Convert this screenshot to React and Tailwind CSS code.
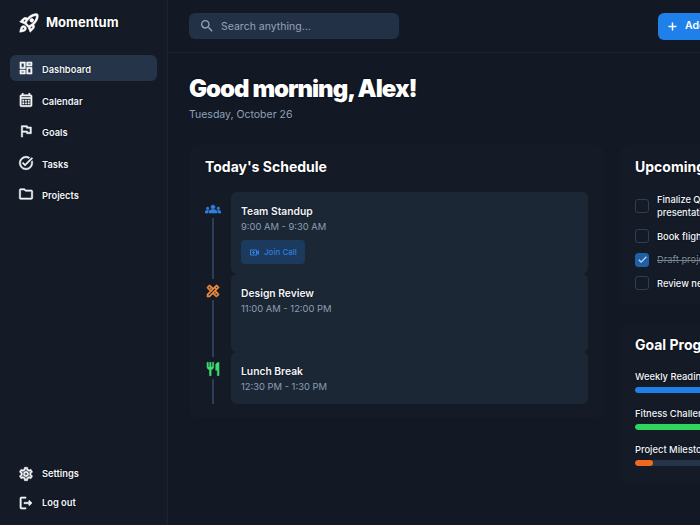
import React from "react";
import {
  MdOutlineRocketLaunch,
  MdOutlineDashboard,
  MdOutlineCalendarMonth,
  MdOutlineFlag,
  MdOutlineTaskAlt,
  MdOutlineFolder,
  MdOutlineSettings,
  MdOutlineLogout,
  MdGroups,
  MdOutlineDesignServices,
  MdRestaurant,
  MdOutlineVideoCall,
  MdSearch,
  MdAdd,
  MdCheck,
} from "react-icons/md";

// thickens the material glyphs, the invisible bounding path must stay unstroked
const heavy = "stroke-current stroke-[0.8] [&_path[fill=none]]:stroke-transparent";

const navItems = [
  { label: "Dashboard", icon: MdOutlineDashboard, active: true },
  { label: "Calendar", icon: MdOutlineCalendarMonth },
  { label: "Goals", icon: MdOutlineFlag },
  { label: "Tasks", icon: MdOutlineTaskAlt },
  { label: "Projects", icon: MdOutlineFolder },
];

const NavItem = ({ label, icon: Icon, active, top }) => (
  <a
    className={`flex h-[26px] items-center gap-[9px] rounded-md pl-[9px] text-[9.3px] font-semibold text-[#f1f5f9] [text-shadow:0_0_2px_#05070c] ${
      active ? "bg-[#263449]" : ""
    }`}
  >
    <Icon className={`h-[14px] w-[14px] shrink-0 scale-[1.15] ${heavy}`} />
    <span className={top ? "translate-y-[1.75px]" : ""}>{label}</span>
  </a>
);

const Sidebar = () => (
  <aside className="flex h-[525px] w-[168px] shrink-0 flex-col border-r border-[#1d2431] bg-[#141a26] pb-[9px]">
    <div className="flex h-[46px] items-center gap-[7px] pl-[19px]">
      <MdOutlineRocketLaunch className={`h-[20px] w-[20px] scale-110 text-white ${heavy}`} />
      <span className="text-[13px] font-bold text-white [text-shadow:0_0_2px_#05070c]">Momentum</span>
    </div>
    <nav className="mt-[9px] flex flex-col gap-[5.5px] pl-[10px] pr-[10px]">
      {navItems.map((item) => (
        <NavItem key={item.label} top {...item} />
      ))}
    </nav>
    <div className="mt-auto flex flex-col gap-[3px] px-[10px]">
      <NavItem label="Settings" icon={MdOutlineSettings} />
      <NavItem label="Log out" icon={MdOutlineLogout} />
    </div>
  </aside>
);

const Header = () => (
  <header className="flex h-[53px] shrink-0 items-center justify-between border-b border-[#1d2431] pl-[21px]">
    <div className="flex h-[26px] w-[210px] items-center gap-[6px] rounded-md bg-[#233146] pl-[10px]">
      <MdSearch className="h-[16px] w-[16px] text-[#94a3b8]" />
      <span className="pt-px text-[10.5px] text-[#94a3b8]">Search anything...</span>
    </div>
    <button className="ml-auto flex h-[27px] w-[110px] shrink-0 -translate-x-[-68px] items-center gap-[6px] rounded-md bg-[#2080ea] pl-[8px] text-[10.5px] font-semibold text-white">
      <MdAdd className={`h-[13px] w-[13px] ${heavy}`} />
      Add Task
    </button>
  </header>
);

const scheduleItems = [
  {
    title: "Team Standup",
    time: "9:00 AM - 9:30 AM",
    icon: MdGroups,
    color: "text-[#2f80e0]",
    height: "h-[82px]",
    lineClass: "mt-[1px] -mb-[5px]",
    call: true,
  },
  {
    title: "Design Review",
    time: "11:00 AM - 12:00 PM",
    icon: MdOutlineDesignServices,
    color: "text-[#f08a3c]",
    height: "h-[78px]",
    lineClass: "mt-[1px] -mb-[5px]",
  },
  {
    title: "Lunch Break",
    time: "12:30 PM - 1:30 PM",
    icon: MdRestaurant,
    color: "text-[#3ddc6b]",
    height: "h-[52px]",
    lineClass: "mt-[2px]",
  },
];

const ScheduleRow = ({ title, time, icon: Icon, color, height, lineClass, call }) => (
  <div className={`flex gap-[10px] ${height}`}>
    <div className="flex w-[16px] shrink-0 flex-col items-center pt-[9px]">
      <Icon className={`h-[16px] w-[16px] shrink-0 ${heavy} ${color}`} />
      <div className={`w-[2px] flex-1 bg-[#2b3f58] ${lineClass}`} />
    </div>
    <div className="flex-1 rounded-md bg-[#1c2736] pl-[10px] pt-[12px]">
      <div className="text-[10.3px] font-semibold leading-[14px] text-[#f1f5f9] [text-shadow:0_0_2px_#05070c]">{title}</div>
      <div className="mt-px text-[9.4px] leading-[15px] text-[#8f9db1]">{time}</div>
      {call && (
        <button className="mt-[6px] flex h-[24px] w-[64px] items-center gap-[4px] rounded-[4px] bg-[#1c3a5e] pl-[8px] text-[8px] font-medium text-[#2f7fdc]">
          <MdOutlineVideoCall className="h-[11px] w-[11px] scale-110" />
          Join Call
        </button>
      )}
    </div>
  </div>
);

const Schedule = () => (
  <section className="h-[273px] w-[415px] shrink-0 rounded-lg bg-[#141b27] pl-[16px] pr-[16px] pt-[12px]">
    <h2 className="text-[14px] font-bold leading-[20px] text-white [text-shadow:0_0_2px_#05070c]">Today's Schedule</h2>
    <div className="mt-[15px] flex flex-col">
      {scheduleItems.map((item) => (
        <ScheduleRow key={item.title} {...item} />
      ))}
    </div>
  </section>
);

const tasks = [
  { text: "Finalize Q3 marketing presentation", h: "h-[28px]" },
  { text: "Book flights to Berlin", h: "h-[14px]", single: true },
  { text: "Draft project proposal", done: true, h: "h-[14px]", single: true },
  { text: "Review new designs", h: "h-[14px]", single: true },
];

const Upcoming = () => (
  <section className="h-[160px] w-[260px] rounded-lg bg-[#141b27] pl-[15px] pt-[12px]">
    <h2 className="whitespace-nowrap text-[14px] font-bold leading-[20px] text-white [text-shadow:0_0_2px_#05070c]">Upcoming Tasks</h2>
    <div className="mt-[14.5px] flex w-[130px] flex-col gap-[9.5px]">
      {tasks.map((t) => (
        <div key={t.text} className={`flex items-center gap-[8px] ${t.h}`}>
          <span
            className={`flex h-[14px] w-[14px] shrink-0 items-center justify-center rounded-[3px] border ${
              t.done ? "border-[#1f5fa8] bg-[#1f5fa8]" : "border-[#2b3f58]"
            }`}
          >
            {t.done && <MdCheck className={`h-[11px] w-[11px] text-[#cfe0f5] ${heavy}`} />}
          </span>
          <span
            className={`text-[9.3px] font-medium leading-[13px] [text-shadow:0_0_2px_#05070c] ${
              t.single ? "whitespace-nowrap" : ""
            } ${t.done ? "text-[#7b8798] line-through" : "text-[#f1f5f9]"}`}
          >
            {t.text}
          </span>
        </div>
      ))}
    </div>
  </section>
);

const goals = [
  { name: "Weekly Reading Goal", color: "bg-[#2080ea]", width: "w-[150px]" },
  { name: "Fitness Challenge", color: "bg-[#2fd65e]", width: "w-[150px]" },
  { name: "Project Milestone", color: "bg-[#f0691e]", width: "w-[18px]" },
];

const GoalProgress = () => (
  <section className="mt-[20px] h-[158px] w-[260px] rounded-lg bg-[#141b27] pl-[15px] pt-[10px]">
    <h2 className="whitespace-nowrap text-[14px] font-bold leading-[20px] text-white [text-shadow:0_0_2px_#05070c]">Goal Progress</h2>
    <div className="mt-[15px] flex flex-col gap-[13.5px]">
      {goals.map((g) => (
        <div key={g.name}>
          <div className="whitespace-nowrap text-[9.4px] font-medium leading-[14px] text-[#f1f5f9] [text-shadow:0_0_2px_#05070c]">{g.name}</div>
          <div className="mt-[3px] h-[6px] w-[200px] overflow-hidden rounded-full bg-[#263449]">
            <div className={`h-full rounded-full ${g.color} ${g.width}`} />
          </div>
        </div>
      ))}
    </div>
  </section>
);

export default function App() {
  return (
    <div className="flex h-[525px] w-[700px] overflow-hidden bg-[#121824] font-['Inter',sans-serif]">
      <Sidebar />
      <main className="flex min-w-0 flex-1 flex-col">
        <Header />
        <div className="pl-[21px] pt-[21px]">
          <h1 className="text-[24px] font-black leading-[30px] tracking-[-1px] text-white [text-shadow:0_0_2px_#05070c]">Good morning, Alex!</h1>
          <p className="mt-[3px] text-[10.5px] leading-[16px] text-[#8fa1ba]">Tuesday, October 26</p>
          <div className="mt-[22px] flex gap-[16px]">
            <Schedule />
            <div className="shrink-0">
              <Upcoming />
              <GoalProgress />
            </div>
          </div>
        </div>
      </main>
    </div>
  );
}
